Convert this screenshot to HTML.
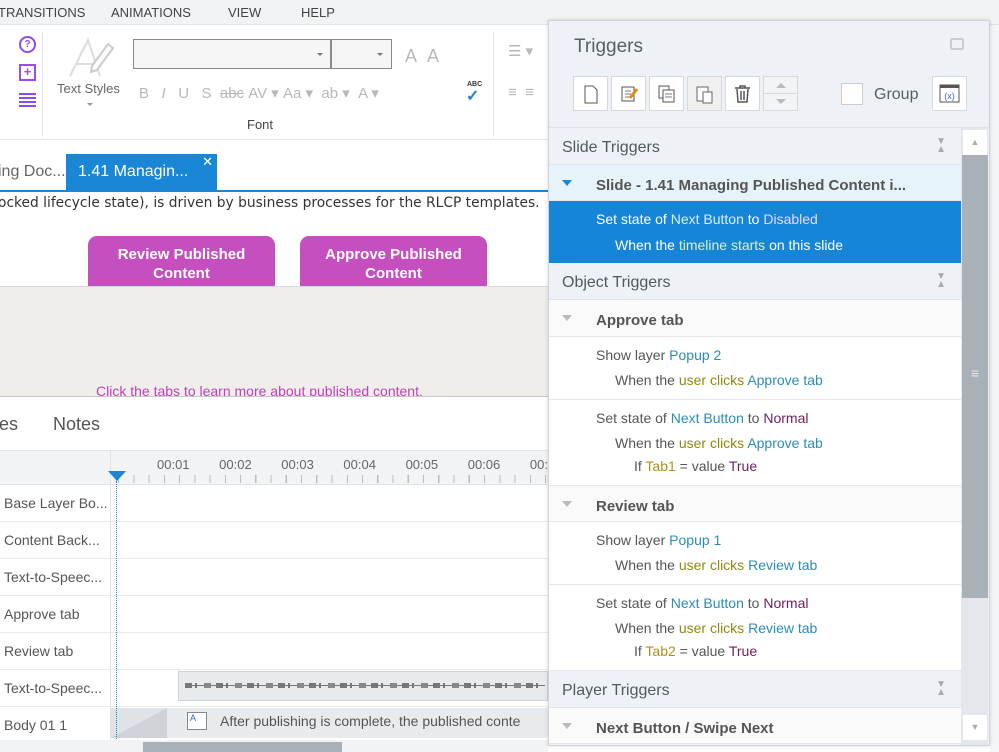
<!DOCTYPE html>
<html><head><meta charset="utf-8">
<style>
*{box-sizing:border-box;margin:0;padding:0}
body{width:999px;height:752px;overflow:hidden;position:relative;background:#fff;font-family:"Liberation Sans",sans-serif;color:#555}
.a{position:absolute;white-space:nowrap}
.menu{left:0;top:0;width:999px;height:25px;background:#f1f3f5;border-bottom:1px solid #e0e3e6}
.menu span{position:absolute;top:5px;font-size:13px;color:#444}
.gi{color:#b8b8b8;font-size:15px}
.tl{font-size:13px;color:#666}
.row{position:absolute;left:0;width:548px;height:37px;border-bottom:1px solid #e8eaec}
.row span{position:absolute;left:4px;top:10px;font-size:14px;color:#555}
.p{position:absolute;left:549px;width:412px}
.hd{background:#eef2f6;border-bottom:1px solid #dfe3e7;font-size:16px;color:#505a64}
.hd span{position:absolute;left:13px;top:11px}
.hd i{position:absolute;right:15px;top:10px;font-style:normal;font-size:10px;color:#aaa;line-height:8px}
.gr{background:#fafafa;border-bottom:1px solid #e5e7ea;font-weight:bold;font-size:15px;color:#555}
.gr span{position:absolute;left:47px;top:12px}
.gr b{position:absolute;left:13px;top:15px;width:0;height:0;border-left:5px solid transparent;border-right:5px solid transparent;border-top:6px solid #bbb}
.it{background:#fff;border-bottom:1px solid #e5e7ea;font-size:14px;color:#555}
.it div{position:absolute;white-space:nowrap}
.l1{left:47px;top:10px}.l2{left:66px;top:35px}.l3{left:85px;top:58px}
.b{color:#2b8cb8}.o{color:#8b8a12}.pu{color:#6c1f5c}.y{color:#b0901c}
.btn{position:absolute;top:76px;width:35px;height:35px;border:1px solid #d6d9dc;background:#fff}
</style></head><body>
<div class="a menu"><span style="left:-2px">TRANSITIONS</span><span style="left:111px">ANIMATIONS</span><span style="left:228px">VIEW</span><span style="left:301px">HELP</span></div>
<!-- ribbon -->
<div class="a" style="left:0;top:25px;width:999px;height:115px;background:#fff;border-bottom:1px solid #e3e5e8"></div>
<div class="a" style="left:19px;top:36px;width:17px;height:17px;border:2px solid #8a4ee8;border-radius:50%;font-size:10px;color:#8a4ee8;text-align:center;line-height:13px;font-weight:bold">?</div>
<div class="a" style="left:19px;top:64px;width:17px;height:17px;border:2px solid #9a4ee8;font-size:13px;color:#9a4ee8;text-align:center;line-height:12px;font-weight:bold">+</div>
<div class="a" style="left:19px;top:93px;width:17px;height:14px;background:repeating-linear-gradient(#8a4ee8 0 2px,transparent 2px 4px)"></div>
<div class="a" style="left:42px;top:32px;width:1px;height:105px;background:#e3e5e8"></div>
<svg class="a" style="left:66px;top:36px" width="50" height="42"><path d="M4 40L22 4L34 40M10 28h20" fill="none" stroke="#ddd" stroke-width="2"/><path d="M26 30l16-22 5 4-16 22-6 2z" fill="#fff" stroke="#ccc" stroke-width="2"/></svg>
<div class="a tl" style="left:57px;top:81px;color:#666">Text Styles</div>
<div class="a" style="left:87px;top:103px;border-left:3px solid transparent;border-right:3px solid transparent;border-top:3px solid #999"></div>
<div class="a" style="left:133px;top:39px;width:198px;height:30px;border:1px solid #8a8a8a;background:#f5f5f5"></div>
<div class="a" style="left:331px;top:39px;width:61px;height:30px;border:1px solid #8a8a8a;background:#f5f5f5"></div>
<div class="a" style="left:317px;top:53px;border-left:3px solid transparent;border-right:3px solid transparent;border-top:3px solid #777"></div>
<div class="a" style="left:377px;top:53px;border-left:3px solid transparent;border-right:3px solid transparent;border-top:3px solid #777"></div>
<div class="a gi" style="left:405px;top:46px;font-size:18px">A&nbsp;&nbsp;A</div>
<div class="a gi" style="left:139px;top:84px">B&nbsp;&nbsp;&nbsp;<i>I</i>&nbsp;&nbsp;&nbsp;U&nbsp;&nbsp;&nbsp;S&nbsp;&nbsp;<s>abc</s>&nbsp;AV ▾&nbsp;Aa ▾&nbsp;&nbsp;ab ▾&nbsp;&nbsp;A ▾</div>
<div class="a" style="left:467px;top:81px;font-size:7px;color:#333;font-weight:bold">ABC</div>
<div class="a" style="left:466px;top:86px;font-size:16px;color:#2a7fd0;font-weight:bold">✓</div>
<div class="a" style="left:247px;top:117px;font-size:13px;color:#444">Font</div>
<div class="a" style="left:493px;top:32px;width:1px;height:105px;background:#e3e5e8"></div>
<div class="a gi" style="left:508px;top:42px">☰ ▾</div>
<div class="a gi" style="left:508px;top:84px">≡&nbsp;&nbsp;≡</div>
<!-- doc tabs -->
<div class="a" style="left:-2px;top:163px;font-size:16px;color:#666">ing Doc...</div>
<div class="a" style="left:66px;top:154px;width:151px;height:36px;background:#1a86d6;color:#fff;font-size:16px;padding:9px 0 0 12px">1.41 Managin...<span style="position:absolute;right:4px;top:0;font-size:13px">✕</span></div>
<div class="a" style="left:0;top:190px;width:548px;height:2px;background:#1a86d6"></div>
<div class="a" style="left:-2px;top:195px;color:#333;font-family:'DejaVu Sans',sans-serif;font-size:13.8px">ocked lifecycle state), is driven by business processes for the RLCP templates.</div>
<div class="a" style="left:88px;top:236px;width:187px;height:50px;background:#c64fc0;border-radius:9px 9px 0 0;color:#fff;font-weight:bold;font-size:15px;text-align:center;line-height:19px;padding-top:9px">Review Published<br>Content</div>
<div class="a" style="left:300px;top:236px;width:187px;height:50px;background:#c64fc0;border-radius:9px 9px 0 0;color:#fff;font-weight:bold;font-size:15px;text-align:center;line-height:19px;padding-top:9px">Approve Published<br>Content</div>
<div class="a" style="left:0;top:286px;width:548px;height:111px;background:#efeeea;border-top:1px solid #d8d8d8;border-bottom:1px solid #c8c8c8;overflow:hidden"><div class="a" style="left:96px;top:96px;font-size:14px;color:#c23fbc">Click the tabs to learn more about published content.</div></div>
<div class="a" style="left:-6px;top:414px;font-size:18px;color:#555">tes</div>
<div class="a" style="left:53px;top:414px;font-size:18px;color:#555">Notes</div>
<!-- timeline -->
<div class="a" style="left:0;top:450px;width:548px;height:35px;background:#f1f3f5;border-top:1px solid #e0e3e6;border-bottom:1px solid #e0e3e6"></div>
<div class="a" style="left:110px;top:450px;width:1px;height:302px;background:#e0e3e6"></div>
<div class="a tl" style="left:157px;top:457px;word-spacing:26px">00:01 00:02 00:03 00:04 00:05 00:06 00:0</div>
<div class="a" style="left:118px;top:475px;width:430px;height:8px;background:repeating-linear-gradient(90deg,#bbb 0 1px,transparent 1px 15.25px)"></div>
<div class="a" style="left:108px;top:471px;border-left:9px solid transparent;border-right:9px solid transparent;border-top:10px solid #1a86d6"></div>
<div class="row" style="top:485px"><span>Base Layer Bo...</span></div>
<div class="row" style="top:522px"><span>Content Back...</span></div>
<div class="row" style="top:559px"><span>Text-to-Speec...</span></div>
<div class="row" style="top:596px"><span>Approve tab</span></div>
<div class="row" style="top:633px"><span>Review tab</span></div>
<div class="row" style="top:670px"><span>Text-to-Speec...</span></div>
<div class="a" style="left:178px;top:671px;width:370px;height:30px;background:#e8ebee;border:1px solid #d0d4d8"></div>
<div class="a" style="left:185px;top:685px;width:360px;height:1px;background:#777"></div>
<div class="a" style="left:185px;top:683px;width:360px;height:5px;background:repeating-linear-gradient(90deg,#777 0 7px,transparent 7px 10px,#777 10px 12px,transparent 12px 19px,#888 19px 26px,transparent 26px 31px)"></div>
<div class="row" style="top:707px"><span>Body 01 1</span></div>
<div class="a" style="left:111px;top:708px;width:437px;height:30px;background:#e8ebee"></div>
<div class="a" style="left:111px;top:708px;width:56px;height:30px;background:linear-gradient(to top left,#cfd3d7 50%,#e0e3e6 50%)"></div>
<div class="a" style="left:187px;top:712px;width:20px;height:18px;border:1px solid #888;background:#fff;font-size:9px;color:#36c;padding-left:2px">A</div>
<div class="a" style="left:220px;top:713px;font-size:14px;color:#555">After publishing is complete, the published conte</div>
<div class="a" style="left:116px;top:481px;width:0;height:264px;border-left:1px dotted #1a86d6"></div>
<div class="a" style="left:0;top:740px;width:548px;height:12px;background:#f1f3f5"></div>
<div class="a" style="left:143px;top:742px;width:199px;height:10px;background:#a9b1b8"></div>
<!-- right edge app -->
<div class="a" style="left:990px;top:25px;width:9px;height:727px;background:#f4f5f7"></div>
<!-- triggers panel -->
<div class="a" style="left:548px;top:20px;width:442px;height:726px;background:#eef2f6;border:1px solid #d0d4d8;box-shadow:0 0 4px rgba(0,0,0,.15)"></div>
<div class="a" style="left:574px;top:36px;font-size:19px;color:#5a5f66">Triggers</div>
<div class="a" style="left:950px;top:38px;width:14px;height:12px;border:2px solid #ccc;border-radius:2px"></div>
<div class="btn" style="left:573px"><svg width="33" height="33"><path d="M11 9h8l4 4v13H11z" fill="#fff" stroke="#555"/></svg></div>
<div class="btn" style="left:611px"><svg width="33" height="33"><rect x="10" y="10" width="12" height="14" fill="#fff" stroke="#555"/><path d="M13 14h6M13 17h6M13 20h5" stroke="#777"/><path d="M18 21l7-9" stroke="#e08a10" stroke-width="3"/></svg></div>
<div class="btn" style="left:649px"><svg width="33" height="33"><rect x="9" y="9" width="10" height="12" fill="#fff" stroke="#555"/><rect x="13" y="13" width="11" height="12" fill="#fff" stroke="#555"/><path d="M15 17h7M15 20h7" stroke="#777"/></svg></div>
<div class="btn" style="left:687px;background:#f0f0f0"><svg width="33" height="33"><rect x="9" y="10" width="11" height="14" fill="#fff" stroke="#666"/><rect x="15" y="15" width="9" height="11" fill="#fff" stroke="#666"/></svg></div>
<div class="btn" style="left:725px"><svg width="33" height="33"><path d="M9 11h15M14 11V9h5v2M11 12l1 13h9l1-13M15 14v9M18 14v9" fill="none" stroke="#555" stroke-width="1.5"/></svg></div>
<div class="btn" style="left:763px;background:#f3f4f5"><div style="position:absolute;left:0;top:16px;width:34px;height:1px;background:#d6d9dc"></div><div class="a" style="left:12px;top:6px;border-left:5px solid transparent;border-right:5px solid transparent;border-bottom:5px solid #bbb"></div><div class="a" style="left:12px;top:22px;border-left:5px solid transparent;border-right:5px solid transparent;border-top:5px solid #bbb"></div></div>
<div class="a" style="left:841px;top:83px;width:22px;height:22px;border:1px solid #ccc;background:#fff"></div>
<div class="a" style="left:874px;top:86px;font-size:16px;color:#5a5f66">Group</div>
<div class="btn" style="left:932px"><svg width="33" height="33"><rect x="7" y="8" width="19" height="17" fill="#fff" stroke="#555"/><rect x="7" y="8" width="19" height="3" fill="#555"/><text x="16.5" y="22" font-size="9" fill="#3a6fc0" text-anchor="middle" font-family="Liberation Sans">(x)</text></svg></div>
<div class="a" style="left:549px;top:127px;width:440px;height:1px;background:#dfe3e7"></div>
<!-- list -->
<div class="a p hd" style="top:128px;height:37px"><span>Slide Triggers</span><i>▼<br>▲</i></div>
<div class="a p gr" style="top:165px;height:36px;background:#e7f3fb"><b style="border-top-color:#1a86d6"></b><span>Slide - 1.41 Managing Published Content i...</span></div>
<div class="a p it" style="top:201px;height:62px;background:#1585d8;color:#fff;border:none"><div class="l1">Set state of <span style="color:#d8eeff">Next Button</span> to <span style="color:#e6d8ff">Disabled</span></div><div class="l2" style="top:36px">When the <span style="color:#d8f0c8">timeline starts</span> on this slide</div></div>
<div class="a p hd" style="top:263px;height:37px"><span>Object Triggers</span><i>▼<br>▲</i></div>
<div class="a p gr" style="top:300px;height:37px"><b></b><span>Approve tab</span></div>
<div class="a p it" style="top:337px;height:63px"><div class="l1">Show layer <span class="b">Popup 2</span></div><div class="l2">When the <span class="o">user clicks</span> <span class="b">Approve tab</span></div></div>
<div class="a p it" style="top:400px;height:86px"><div class="l1">Set state of <span class="b">Next Button</span> to <span class="pu">Normal</span></div><div class="l2">When the <span class="o">user clicks</span> <span class="b">Approve tab</span></div><div class="l3">If <span class="y">Tab1</span> = value <span class="pu">True</span></div></div>
<div class="a p gr" style="top:486px;height:36px"><b></b><span>Review tab</span></div>
<div class="a p it" style="top:522px;height:63px"><div class="l1">Show layer <span class="b">Popup 1</span></div><div class="l2">When the <span class="o">user clicks</span> <span class="b">Review tab</span></div></div>
<div class="a p it" style="top:585px;height:86px"><div class="l1">Set state of <span class="b">Next Button</span> to <span class="pu">Normal</span></div><div class="l2">When the <span class="o">user clicks</span> <span class="b">Review tab</span></div><div class="l3">If <span class="y">Tab2</span> = value <span class="pu">True</span></div></div>
<div class="a p hd" style="top:671px;height:37px"><span>Player Triggers</span><i>▼<br>▲</i></div>
<div class="a p gr" style="top:708px;height:36px"><b></b><span>Next Button / Swipe Next</span></div>
<!-- scrollbar -->
<div class="a" style="left:961px;top:128px;width:27px;height:617px;background:#e3e7eb"></div>
<div class="a" style="left:963px;top:130px;width:24px;height:25px;background:#fff;font-size:9px;color:#aaa;text-align:center;line-height:25px">▲</div>
<div class="a" style="left:962px;top:155px;width:26px;height:443px;background:#a9b1b8;color:#e8eaec;font-size:14px;text-align:center;padding-top:210px">≡</div>
<div class="a" style="left:963px;top:715px;width:24px;height:25px;background:#fff;font-size:9px;color:#aaa;text-align:center;line-height:25px">▼</div>
</body></html>
